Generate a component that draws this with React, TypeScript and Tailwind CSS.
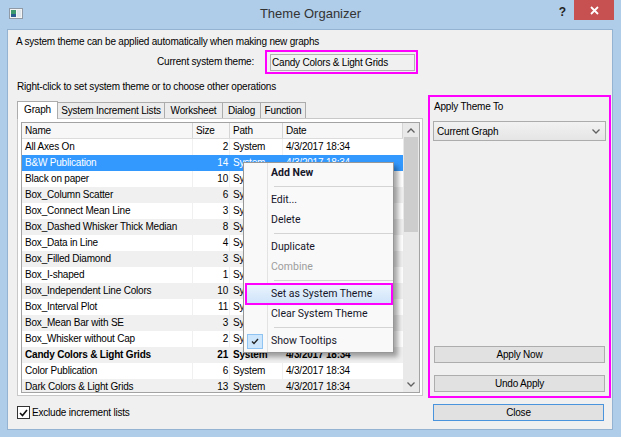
import React from "react";

const rows: [string, string][] = [
  ["All Axes On", "2"],
  ["B&W Publication", "14"],
  ["Black on paper", "10"],
  ["Box_Column Scatter", "6"],
  ["Box_Connect Mean Line", "3"],
  ["Box_Dashed Whisker Thick Median", "8"],
  ["Box_Data in Line", "4"],
  ["Box_Filled Diamond", "3"],
  ["Box_I-shaped", "1"],
  ["Box_Independent Line Colors", "10"],
  ["Box_Interval Plot", "11"],
  ["Box_Mean Bar with SE", "3"],
  ["Box_Whisker without Cap", "2"],
  ["Candy Colors & Light Grids", "21"],
  ["Color Publication", "6"],
  ["Dark Colors & Light Grids", "13"],
];

function Chevron({ up = false }: { up?: boolean }) {
  return (
    <svg width="8" height="5" viewBox="0 0 8 5">
      <polyline
        points={up ? "0.5,4.5 4,1 7.5,4.5" : "0.5,0.5 4,4 7.5,0.5"}
        fill="none"
        stroke="#606060"
        strokeWidth="1.3"
      />
    </svg>
  );
}

function MenuItem({ label, bold = false, disabled = false }: { label: string; bold?: boolean; disabled?: boolean }) {
  return (
    <div
      className={
        "h-[20px] flex items-center pl-[27px] shrink-0 " +
        (bold ? "font-bold " : "font-normal ") +
        (disabled ? "text-[#9d9d9d]" : "text-[#16162a]")
      }
    >
      {label}
    </div>
  );
}

function Sep() {
  return (
    <div className="h-[7px] flex items-center pl-[30px] shrink-0">
      <div className="h-px flex-1 bg-[#d4d4d4]" />
    </div>
  );
}

export default function App() {
  return (
    <div className="relative w-[621px] h-[437px] bg-[#afcce8] flex flex-col font-['Liberation_Sans',Arial,sans-serif] text-[10px] tracking-[-0.2px] text-black overflow-hidden">
      {/* Title bar */}
      <div className="h-[29px] grid grid-cols-[1fr_auto_1fr] items-start shrink-0">
        <div className="pl-[9px] pt-[8px]">
          <svg width="14" height="11" viewBox="0 0 14 11">
            <rect x="0.5" y="0.5" width="13" height="10" fill="#f4f4f4" stroke="#8f9aa6" />
            <rect x="2" y="2" width="5" height="4" fill="#3d9a6c" />
            <rect x="2" y="6" width="5" height="3" fill="#2a5d8f" />
            <rect x="8" y="2" width="4" height="7" fill="#dfe6ec" />
          </svg>
        </div>
        <div className="pt-[5px] text-[13px] tracking-normal text-[#333] leading-[18px]">Theme Organizer</div>
        <div className="flex justify-end items-start">
          <div className="mt-[5px] mr-[8px] text-[12px] font-bold text-[#222] tracking-normal leading-[14px]">?</div>
          <div className="w-[40px] h-[20px] mr-[7px] bg-[#c75050] flex items-center justify-center">
            <svg width="9" height="9" viewBox="0 0 9 9">
              <path d="M1 1 L8 8 M8 1 L1 8" stroke="#ffffff" strokeWidth="1.8" />
            </svg>
          </div>
        </div>
      </div>

      {/* Client area */}
      <div className="flex-1 ml-[7px] mr-[8px] mb-[7px] bg-[#f0f0f0] border border-[#94b2d1] flex flex-col">
        <div className="pl-[8px] mt-[5px] h-[14px] leading-[14px]">
          A system theme can be applied automatically when making new graphs
        </div>
        <div className="mt-[1px] h-[24px] flex items-center">
          <div className="w-[246px] text-right leading-[14px]">Current system theme:</div>
          <div className="ml-[11px] w-[153px] h-[24px] border-2 border-[#ff00ff] flex items-center pl-[3px] pr-[1px]">
            <div className="flex-1 h-[17px] border border-[#b0b0b0] bg-[#f0f0f0] pl-px leading-[15px]">
              Candy Colors &amp; Light Grids
            </div>
          </div>
        </div>
        <div className="pl-[9px] mt-[6px] h-[14px] leading-[14px]">
          Right-click to set system theme or to choose other operations
        </div>

        {/* Main area */}
        <div className="mt-[1px] flex items-start">
          {/* Tabs + panel */}
          <div className="ml-[9px] mt-[5px] w-[406px] flex flex-col">
            <div className="flex items-end h-[18px]">
              <div className="w-[41px] h-[18px] bg-white border border-b-0 border-[#acacac] flex items-center justify-center leading-[14px] relative z-10 -mb-px pb-px">
                Graph
              </div>
              <div className="-ml-px w-[108px] h-[16px] bg-[#ececec] border border-b-0 border-[#acacac] flex items-center justify-center leading-[14px]">
                System Increment Lists
              </div>
              <div className="-ml-px w-[59px] h-[16px] bg-[#ececec] border border-b-0 border-[#acacac] flex items-center justify-center leading-[14px]">
                Worksheet
              </div>
              <div className="-ml-px w-[39px] h-[16px] bg-[#ececec] border border-b-0 border-[#acacac] flex items-center justify-center leading-[14px]">
                Dialog
              </div>
              <div className="-ml-px w-[46px] h-[16px] bg-[#ececec] border border-b-0 border-[#acacac] flex items-center justify-center leading-[14px]">
                Function
              </div>
            </div>
            <div className="h-[278px] bg-white border border-[#c8c8c8] pt-[3px] pl-[3px] pr-[2px] pb-[2px] flex">
              <div className="flex-1 border border-[#a3a3a3] flex overflow-hidden">
                <div className="w-[381px] bg-[#f0f0f0] flex flex-col overflow-hidden">
                  {/* Header */}
                  <div className="h-[16px] shrink-0 flex bg-[#f7f7f7] border-b border-[#dcdcdc] leading-[15px]">
                    <div className="w-[171px] pl-[3px] border-r border-[#d5d5d5]">Name</div>
                    <div className="w-[37px] pl-[3px] border-r border-[#d5d5d5]">Size</div>
                    <div className="w-[53px] pl-[3px] border-r border-[#d5d5d5]">Path</div>
                    <div className="w-[120px] pl-[3px] border-r border-[#d5d5d5]">Date</div>
                  </div>
                  {rows.map(([n, s], i) => {
                    const sel = i === 1;
                    const bold = i === 13;
                    const white = !sel && i % 2 === 0;
                    return (
                      <div
                        key={n}
                        className={
                          "h-[16px] shrink-0 flex gap-px leading-[16px] " +
                          (sel ? "bg-[#3399ff] text-white " : "text-black ") +
                          (bold ? "font-bold" : "")
                        }
                      >
                        <div className={"w-[170px] pl-[3px] whitespace-nowrap " + (white ? "bg-white" : "")}>{n}</div>
                        <div className={"w-[36px] pr-px text-right " + (white ? "bg-white" : "")}>{s}</div>
                        <div className={"w-[52px] pl-[3px] " + (white ? "bg-white" : "")}>System</div>
                        <div className={"w-[120px] pl-[3px] whitespace-nowrap " + (white ? "bg-white" : "")}>4/3/2017 18:34</div>
                      </div>
                    );
                  })}
                </div>
                {/* Scrollbar */}
                <div className="w-[16px] bg-[#e9e9e9] flex flex-col items-center">
                  <div className="h-[14px] flex items-center justify-center">
                    <Chevron up />
                  </div>
                  <div className="w-[14px] h-[95px] bg-[#cdcdcd]" />
                  <div className="flex-1" />
                  <div className="h-[16px] flex items-center justify-center">
                    <Chevron />
                  </div>
                </div>
              </div>
            </div>
          </div>

          {/* Apply Theme To */}
          <div className="ml-[5px] w-[183px] h-[303px] border-2 border-[#ff00ff] flex flex-col">
            <div className="pl-[4px] pt-[3px] leading-[14px]">Apply Theme To</div>
            <div className="ml-[3px] mt-[7px] w-[173px] h-[20px] border border-[#acacac] bg-gradient-to-b from-[#f2f2f2] to-[#e5e5e5] flex items-center pl-[3px] pr-[5px]">
              <span className="flex-1">Current Graph</span>
              <Chevron />
            </div>
            <div className="flex-1" />
            <div className="ml-[4px] w-[171px] h-[17px] border border-[#adadad] bg-[#e1e1e1] flex items-center justify-center">
              Apply Now
            </div>
            <div className="ml-[4px] mt-[12px] mb-[4px] w-[171px] h-[17px] border border-[#adadad] bg-[#e1e1e1] flex items-center justify-center">
              Undo Apply
            </div>
          </div>
        </div>

        {/* Bottom row */}
        <div className="mt-[6px] flex items-center justify-between">
          <div className="pl-[9px] flex items-center">
            <div className="w-[13px] h-[13px] border border-[#333] bg-white flex items-center justify-center">
              <svg width="9" height="8" viewBox="0 0 9 8">
                <polyline points="1,4 3.5,6.5 8,1" fill="none" stroke="#111" strokeWidth="1.6" />
              </svg>
            </div>
            <span className="ml-[2px] leading-[14px]">Exclude increment lists</span>
          </div>
          <div className="mr-[8px] w-[171px] h-[17px] border border-[#4a93dd] bg-[#e1e1e1] flex items-center justify-center">
            Close
          </div>
        </div>
      </div>

      {/* Context menu */}
      <div className="absolute left-[243px] top-[162px] w-[151px] h-[191px] bg-[#f9f9f9] border border-[#979797] shadow-[4px_4px_5px_rgba(0,0,0,0.35)] flex flex-col font-['Roboto',Arial,sans-serif] text-[10.5px] tracking-normal">
        <div className="absolute left-[23px] top-0 bottom-0 w-px bg-[#e3e3e3]" />
        <MenuItem label="Add New" bold />
        <Sep />
        <MenuItem label="Edit..." />
        <MenuItem label="Delete" />
        <Sep />
        <MenuItem label="Duplicate" />
        <MenuItem label="Combine" disabled />
        <Sep />
        <div className="relative -my-px ml-px h-[22px] shrink-0 border-2 border-[#ff00ff] bg-gradient-to-b from-[#eaf3fd] to-[#cfe4fa] flex items-center pl-[24px] font-normal text-[#16162a]">
          Set as System Theme
        </div>
        <MenuItem label="Clear System Theme" />
        <Sep />
        <div className="h-[20px] flex items-center pl-[3px] shrink-0 font-normal text-[#16162a]">
          <div className="relative w-[16px] h-[15px] bg-[#cde6fb] border border-[#8ec3f2] flex items-center justify-center">
            <svg width="8" height="7" viewBox="0 0 8 7">
              <polyline points="1,3.5 3,5.5 7,1" fill="none" stroke="#222" strokeWidth="1.4" />
            </svg>
          </div>
          <span className="ml-[8px]">Show Tooltips</span>
        </div>
      </div>
    </div>
  );
}
